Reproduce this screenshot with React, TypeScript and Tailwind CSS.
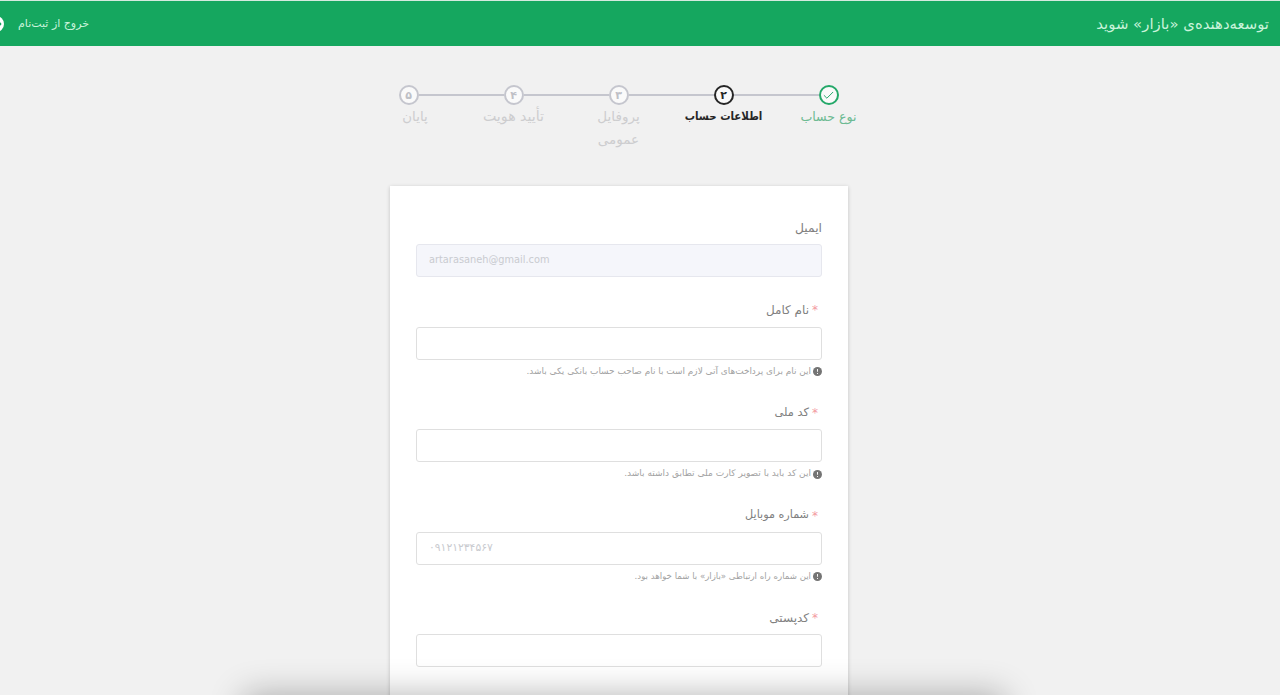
import { ArrowRight, Check } from "lucide-react";
import { clsx } from "clsx";

interface Step {
  number: string;
  title: string;
  status: "done" | "active" | "pending";
  titleClass: string;
}

interface Field {
  label: string;
  labelClass: string;
  required?: boolean;
  placeholder?: string;
  placeholderClass?: string;
  disabled?: boolean;
  hint?: string;
  hintClass?: string;
}

const steps: Step[] = [
  { number: "۱", title: "نوع حساب", status: "done", titleClass: "text-[12.6px]" },
  {
    number: "۲",
    title: "اطلاعات حساب",
    status: "active",
    titleClass: "font-['DejaVu_Sans_Condensed','DejaVu_Sans',sans-serif] text-[11.4px]",
  },
  { number: "۳", title: "پروفایل عمومی", status: "pending", titleClass: "px-3 text-[13.5px]" },
  { number: "۴", title: "تأیید هویت", status: "pending", titleClass: "text-[14.2px]" },
  { number: "۵", title: "پایان", status: "pending", titleClass: "pl-[13px] text-[13.3px]" },
];

const fields: Field[] = [
  {
    label: "ایمیل",
    labelClass: "pt-px text-[12.3px]",
    placeholder: "artarasaneh@gmail.com",
    placeholderClass:
      "pb-[3px] placeholder:font-['DejaVu_Sans_Condensed','DejaVu_Sans',sans-serif] placeholder:text-[10.9px]",
    disabled: true,
  },
  {
    label: "نام کامل",
    labelClass: "text-[12px]",
    required: true,
    hint: "این نام برای پرداخت‌های آتی لازم است با نام صاحب حساب بانکی یکی باشد.",
    hintClass: "text-[8.92px]",
  },
  {
    label: "کد ملی",
    labelClass: "pt-px text-[11.4px]",
    required: true,
    hint: "این کد باید با تصویر کارت ملی تطابق داشته باشد.",
    hintClass: "text-[9.02px]",
  },
  {
    label: "شماره موبایل",
    labelClass: "pt-px text-[11.2px]",
    required: true,
    placeholder: "۰۹۱۲۱۲۳۴۵۶۷",
    placeholderClass: "pb-[1px] placeholder:text-[10.8px]",
    hint: "این شماره راه ارتباطی «بازار» با شما خواهد بود.",
    hintClass: "text-[8.6px]",
  },
  { label: "کدپستی", labelClass: "text-[12px]", required: true },
];

const Header = () => {
  return (
    <header className="flex h-[46px] items-center justify-between border-t border-[#d5eadf] bg-[#15a75f] pr-[11px] text-[#c9f3db]">
      <h1 className="whitespace-nowrap text-[14.9px] font-normal leading-5">توسعه‌دهنده‌ی «بازار» شوید</h1>
      <button className="flex items-center gap-[14px]">
        <span className="whitespace-nowrap text-[11px] leading-4">خروج از ثبت‌نام</span>
        <span className="-ml-3 flex size-4 items-center justify-center rounded-full bg-white text-[#15a75f]">
          <ArrowRight size={14} strokeWidth={4} />
        </span>
      </button>
    </header>
  );
};

const StepItem = ({ step, last }: { step: Step; last: boolean }) => {
  return (
    <li className="relative flex w-[105px] flex-col items-center">
      {!last && <span className="absolute right-[62px] top-[9px] h-[2px] w-[85px] bg-[#c5c6ce]" />}
      <span
        className={clsx(
          "flex size-5 items-center justify-center rounded-full border-2 bg-[#fafafa] text-[11px] font-bold leading-none",
          step.status === "done" && "border-[#24a869] text-[#24a869]",
          step.status === "active" && "border-[#262626] text-[#262626]",
          step.status === "pending" && "border-[#c5c6ce] text-[#bfc0c6]"
        )}
      >
        {step.status === "done" ? <Check size={13} strokeWidth={1.8} /> : step.number}
      </span>
      <span
        className={clsx(
          "flex w-[80px] justify-center text-center leading-[23px]",
          step.titleClass,
          step.status === "done" && "text-[#6cba92]",
          step.status === "active" && "font-bold text-[#262626]",
          step.status === "pending" && "text-[#cdcdcf]"
        )}
      >
        {step.title}
      </span>
    </li>
  );
};

const HintIcon = () => {
  return (
    <svg viewBox="0 0 16 16" className="size-[9px] shrink-0">
      <circle cx="8" cy="8" r="8" fill="#747474" />
      <path d="M8 3.5v5M8 10.5v2" stroke="#f4f4f4" strokeWidth="1.8" />
    </svg>
  );
};

const FormField = ({ field }: { field: Field }) => {
  return (
    <div className={clsx("flex flex-col", field.hint ? "h-[102.5px]" : "h-[82.5px]")}>
      <label className={clsx("mb-2 flex h-[17px] items-center text-[#808080]", field.labelClass)}>
        {field.required && <span className="ml-[3px] mr-1 w-[6px] text-[12px] text-[#f39a9f]">*</span>}
        <span>{field.label}</span>
      </label>
      <input
        dir="ltr"
        disabled={field.disabled}
        placeholder={field.placeholder}
        className={clsx(
          "h-[33px] w-full shrink-0 rounded-[3px] border px-3 text-left text-[11px] outline-none placeholder:text-[#c9cbd0]",
          field.placeholderClass,
          field.disabled ? "border-[#e6e7ee] bg-[#f5f6fb]" : "border-[#dfdfdf] bg-white"
        )}
      />
      {field.hint && (
        <p className="mt-1 flex h-4 items-center gap-[2px] text-[#a2a2a2]">
          <HintIcon />
          <span className={clsx("whitespace-nowrap", field.hintClass)}>{field.hint}</span>
        </p>
      )}
    </div>
  );
};

const App = () => {
  return (
    <div
      dir="rtl"
      className="relative h-[695px] overflow-hidden bg-[#f1f1f1] font-['DejaVu_Sans',sans-serif]"
    >
      <Header />
      <main className="flex flex-col pr-[399px] pt-[39px]">
        <ol className="flex h-[101px] items-start">
          {steps.map((step, index) => (
            <StepItem key={step.number} step={step} last={index === steps.length - 1} />
          ))}
        </ol>
        <form className="mr-[33px] h-[540px] w-[458px] bg-white px-[26px] pt-[33px] shadow-[0_1px_4px_rgba(0,0,0,0.2)]">
          {fields.map((field) => (
            <FormField key={field.label} field={field} />
          ))}
        </form>
      </main>
      <div className="pointer-events-none absolute left-[248px] top-[699px] h-[60px] w-[752px] shadow-[0_0_34px_4px_rgba(0,0,0,0.3)]" />
    </div>
  );
};

export default App;
